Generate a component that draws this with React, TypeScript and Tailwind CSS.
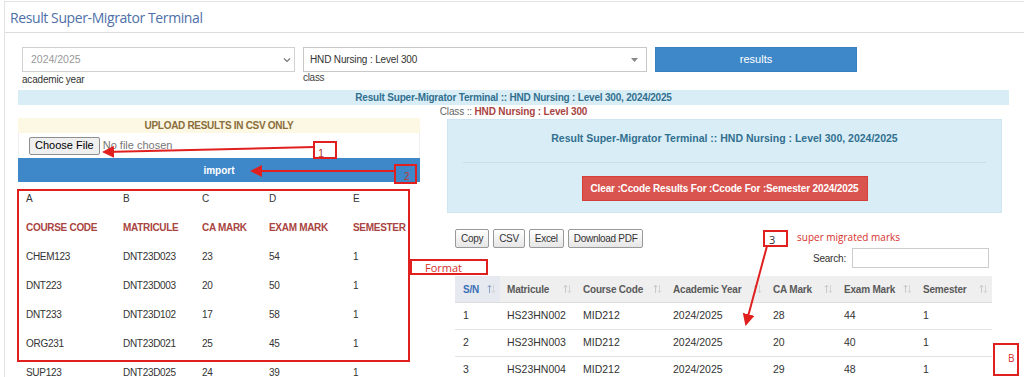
import React from "react";

const arial = "font-['Liberation_Sans',Arial,sans-serif]";

const formatRows = [
  ["CHEM123", "DNT23D023", "23", "54", "1"],
  ["DNT223", "DNT23D003", "20", "50", "1"],
  ["DNT233", "DNT23D102", "17", "58", "1"],
  ["ORG231", "DNT23D021", "25", "45", "1"],
  ["SUP123", "DNT23D025", "24", "39", "1"],
];

const results = [
  ["1", "HS23HN002", "MID212", "2024/2025", "28", "44", "1"],
  ["2", "HS23HN003", "MID212", "2024/2025", "20", "40", "1"],
  ["3", "HS23HN004", "MID212", "2024/2025", "29", "48", "1"],
];

const SortIcon = ({ active = false }: { active?: boolean }) => (
  <svg width="9" height="10" viewBox="0 0 9 10" className="shrink-0">
    <path d="M2.5 9V1.5M0.8 3.2L2.5 1.2L4.2 3.2" stroke={active ? "#8aa2c8" : "#c9c9c9"} strokeWidth="1" fill="none" />
    <path d="M6.5 1V8.5M4.8 6.8L6.5 8.8L8.2 6.8" stroke="#d4d4d4" strokeWidth="1" fill="none" />
  </svg>
);

const FormatRow = ({ cells, className = "" }: { cells: string[]; className?: string }) => (
  <div className={`h-[29px] flex items-center text-[10px] tracking-[-0.3px] ${className}`}>
    <span className="w-[105px] pl-[8px]">{cells[0]}</span>
    <span className="w-[79px]">{cells[1]}</span>
    <span className="w-[67px]">{cells[2]}</span>
    <span className="w-[84px]">{cells[3]}</span>
    <span>{cells[4]}</span>
  </div>
);

const Annotations = () => (
  <>
    <svg className="absolute inset-0 pointer-events-none" width="1024" height="377">
      <defs>
        <marker id="ah" markerWidth="6" markerHeight="6" refX="5" refY="3" orient="auto">
          <path d="M0 0L6 3L0 6Z" fill="#e0201f" />
        </marker>
      </defs>
      <line x1="314" y1="147" x2="104" y2="152" stroke="#e0201f" strokeWidth="2" markerEnd="url(#ah)" />
      <line x1="394" y1="171" x2="252" y2="171" stroke="#e0201f" strokeWidth="2" markerEnd="url(#ah)" />
      <line x1="767" y1="246" x2="746" y2="324" stroke="#e0201f" strokeWidth="2" markerEnd="url(#ah)" />
    </svg>
    <div className="absolute left-[313px] top-[141px] w-[24px] h-[18px] border-2 border-[#e0201f] text-[#c0392b] text-[11px] leading-none pl-[3px] pt-[5px]">1</div>
    <div className="absolute left-[394px] top-[164px] w-[23px] h-[20px] border-2 border-[#e0201f] text-[#c0392b] text-[10px] leading-none pl-[8px] pt-[6px]">2</div>
    <div className="absolute left-[17px] top-[189px] w-[393px] h-[173px] border-2 border-[#e0201f]" />
    <div className="absolute left-[410px] top-[259px] w-[78px] h-[16px] border-2 border-[#e0201f] text-[#d6302b] text-[11px] leading-none pl-[13px] pt-[1px] font-['Open_Sans',sans-serif]">Format</div>
    <div className="absolute left-[763px] top-[230px] w-[25px] h-[17px] border-2 border-[#e0201f] text-[#333] text-[11px] leading-none pl-[4px] pt-[2px] font-['Open_Sans',sans-serif]">3</div>
    <div className="absolute left-[797px] top-[230px] text-[#d6302b] text-[10px] font-['Open_Sans',sans-serif]">super migrated marks</div>
    <div className="absolute left-[993px] top-[343px] w-[26px] h-[33px] border-2 border-[#e0201f] text-[#d6302b] text-[10px] pl-[13px] pt-[6px] font-['Open_Sans',sans-serif]">B</div>
  </>
);

export default function App() {
  return (
    <div className={`relative w-[1024px] h-[377px] overflow-hidden bg-white text-[#333] ${arial}`}>
      <div className="ml-[4px] mt-[1px] h-full border-l border-t border-[#e2e2e2]">
        <div className="h-[31px] border-b border-[#dcdcdc] flex items-center pl-[5px]">
          <h1 className="font-['Open_Sans',sans-serif] text-[14px] tracking-[-0.4px] text-[#4e70a8]">
            Result Super-Migrator Terminal
          </h1>
        </div>

        <div className="pl-[13px] w-[1004px]">
          <div className="flex gap-[8px] px-[4px] mt-[14px]">
            <div className="w-[273px]">
              <div className="h-[25px] border border-[#d0d0d0] flex items-center justify-between pl-[8px] pr-[3px] text-[10.5px] text-[#999]">
                2024/2025
                <svg width="8" height="6" viewBox="0 0 8 6"><path d="M1 1.5L4 4.5L7 1.5" stroke="#777" strokeWidth="1.2" fill="none" /></svg>
              </div>
              <div className="text-[10px] tracking-[-0.2px] leading-[14px] mt-[1px]">academic year</div>
            </div>
            <div className="w-[344px]">
              <div className="h-[25px] border border-[#c8c8c8] flex items-center justify-between pl-[6px] pr-[8px] text-[10px] tracking-[-0.15px]">
                HND Nursing : Level 300
                <svg width="7" height="4" viewBox="0 0 7 4"><path d="M0 0H7L3.5 4Z" fill="#888" /></svg>
              </div>
              <div className="text-[10px] tracking-[-0.3px] leading-[12px] text-[#444]">class</div>
            </div>
            <button className="w-[202px] h-[25px] bg-[#3e88ca] border border-[#3a7fbd] text-white text-[11px]">results</button>
          </div>

          <div className="mt-[3px] h-[15px] bg-[#d9edf7] flex items-center justify-center text-[10px] tracking-[-0.2px] font-bold text-[#31708f]">
            Result Super-Migrator Terminal :: HND Nursing : Level 300, 2024/2025
          </div>
          <div className="h-[13px] flex items-center justify-center text-[10px] tracking-[-0.15px] text-[#666]">
            Class ::&nbsp;<span className="font-bold text-[#a94442]">HND Nursing : Level 300</span>
          </div>

          <div className="flex gap-[27px]">
            <div className="w-[402px] shrink-0">
              <div className="h-[15px] bg-[#fcf8e3] flex items-center justify-center text-[10px] tracking-[-0.3px] font-bold text-[#8a6d3b]">
                UPLOAD RESULTS IN CSV ONLY
              </div>
              <div className="h-[25px] border-x border-[#eee] flex items-center pl-[10px] gap-[3px] text-[11px]">
                <span className="h-[18px] px-[5px] flex items-center border border-[#8f8f8f] rounded-[2px] bg-[#efefef] text-black">Choose File</span>
                <span className="text-[#777]">No file chosen</span>
              </div>
              <div className="h-[24px] bg-[#3e88ca] flex items-center justify-center text-white text-[10px] font-bold">import</div>

              <div className="mt-[2px]">
                <FormatRow cells={["A", "B", "C", "D", "E"]} />
                <FormatRow
                  cells={["COURSE CODE", "MATRICULE", "CA MARK", "EXAM MARK", "SEMESTER"]}
                  className="font-bold text-[#a94442]"
                />
                {formatRows.map((r) => (
                  <FormatRow key={r[0]} cells={r} />
                ))}
              </div>
            </div>

            <div className="w-[555px] shrink-0">
              <div className="mt-[1px] h-[94px] bg-[#d9edf7] border border-[#cfe6f2] px-[15px] flex flex-col items-center">
                <div className="mt-[12px] h-[14px] flex items-center text-[10.5px] font-bold text-[#31708f]">
                  Result Super-Migrator Terminal :: HND Nursing : Level 300, 2024/2025
                </div>
                <div className="w-full mt-[16px] border-t border-[#c4dfee]" />
                <button className="mt-[13px] h-[25px] w-[286px] bg-[#d9534f] border border-[#d43f3a] text-white text-[10px] tracking-[-0.15px] font-bold whitespace-nowrap">
                  Clear :Ccode Results For :Ccode For :Semester 2024/2025
                </button>
              </div>

              <div className="pl-[8px] pr-[12px]">
                <div className="mt-[16px] flex gap-[4px]">
                  {["Copy", "CSV", "Excel", "Download PDF"].map((b) => (
                    <span key={b} className="h-[19px] px-[5px] flex items-center border border-[#999] rounded-[2px] bg-gradient-to-b from-white to-[#e6e6e6] text-[10px] tracking-[-0.3px] text-[#333]">
                      {b}
                    </span>
                  ))}
                </div>
                <div className="flex justify-end items-center gap-[6px] pr-[1px]">
                  <span className="text-[10px] tracking-[-0.2px] text-[#333]">Search:</span>
                  <span className="w-[137px] h-[20px] border border-[#ccc]" />
                </div>
                <div className="mt-[8px] w-[537px]">
                  <div className="h-[27px] bg-[#efefef] flex items-center font-bold text-[10px] tracking-[-0.2px] text-[#5a5a5a] border-b border-[#ddd]">
                    <div className="w-[45px] h-full bg-[#e6e9ef] flex items-center justify-between pl-[8px] pr-[4px] text-[#3b6fb6]">S/N <SortIcon active /></div>
                    <div className="w-[76px] flex items-center justify-between pl-[7px] pr-[4px]">Matricule <SortIcon /></div>
                    <div className="w-[90px] flex items-center justify-between pl-[7px] pr-[4px]">Course Code <SortIcon /></div>
                    <div className="w-[100px] flex items-center justify-between pl-[7px] pr-[4px]">Academic Year <SortIcon /></div>
                    <div className="w-[71px] flex items-center justify-between pl-[7px] pr-[4px]">CA Mark <SortIcon /></div>
                    <div className="w-[79px] flex items-center justify-between pl-[7px] pr-[4px]">Exam Mark <SortIcon /></div>
                    <div className="flex-1 flex items-center justify-between pl-[7px] pr-[4px]">Semester <SortIcon /></div>
                  </div>
                  {results.map((r) => (
                    <div key={r[0]} className="h-[27px] flex items-center border-b border-[#e2e2e2] text-[10.5px] text-[#333]">
                      <div className="w-[45px] pl-[8px]">{r[0]}</div>
                      <div className="w-[76px] pl-[7px]">{r[1]}</div>
                      <div className="w-[90px] pl-[7px]">{r[2]}</div>
                      <div className="w-[100px] pl-[7px]">{r[3]}</div>
                      <div className="w-[71px] pl-[7px]">{r[4]}</div>
                      <div className="w-[79px] pl-[7px]">{r[5]}</div>
                      <div className="flex-1 pl-[7px]">{r[6]}</div>
                    </div>
                  ))}
                </div>
              </div>
            </div>
          </div>
        </div>
      </div>
      <Annotations />
    </div>
  );
}
